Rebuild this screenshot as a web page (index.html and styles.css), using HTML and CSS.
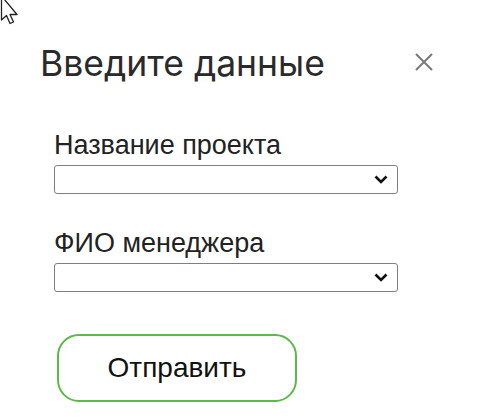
FILE: index.html
```html
<!DOCTYPE html>
<html lang="ru">
<head>
    <meta charset="UTF-8">
    <meta name="viewport" content="width=device-width, initial-scale=1.0">
    <title>Введите данные</title>
    <link rel="stylesheet" href="styles.css">
</head>
<body>
    <svg class="cursor" width="20" height="30" viewBox="0 0 20 30">
        <path d="M1.5 -4 L1.5 20 L6.5 15.5 L10 23.5 L13.5 22 L10 14.5 L17 14.5 Z" fill="#fff" stroke="#222" stroke-width="1.3" stroke-linejoin="round"/>
    </svg>
    <div class="dialog">
        <div class="dialog-header">
            <h2>Введите данные</h2>
            <button class="close" aria-label="Закрыть">
                <svg width="20" height="20" viewBox="0 0 20 20">
                    <path d="M2 2 L18 18 M18 2 L2 18" stroke="#7a7a7a" stroke-width="2"/>
                </svg>
            </button>
        </div>
        <form class="form">
            <label class="field">
                <span>Название проекта</span>
                <div class="select-wrap">
                    <select></select>
                    <svg class="chevron" width="14" height="9" viewBox="0 0 14 9">
                        <path d="M1.5 1.5 L7 7 L12.5 1.5" fill="none" stroke="#111" stroke-width="2.6"/>
                    </svg>
                </div>
            </label>
            <label class="field">
                <span>ФИО менеджера</span>
                <div class="select-wrap">
                    <select></select>
                    <svg class="chevron" width="14" height="9" viewBox="0 0 14 9">
                        <path d="M1.5 1.5 L7 7 L12.5 1.5" fill="none" stroke="#111" stroke-width="2.6"/>
                    </svg>
                </div>
            </label>
            <button type="submit" class="submit">Отправить</button>
        </form>
    </div>
</body>
</html>
```

FILE: styles.css
```css
* {
    box-sizing: border-box;
    margin: 0;
    padding: 0;
}

body {
    font-family: 'Liberation Sans', Arial, sans-serif;
    background-color: #ffffff;
    color: #1a1a1a;
    width: 490px;
    height: 420px;
    overflow: hidden;
}

.cursor {
    position: absolute;
    left: 0;
    top: 0;
}

.dialog {
    padding: 42px 0 0 40px;
    width: 450px;
}

.dialog-header {
    display: flex;
    justify-content: space-between;
    align-items: center;
}

h2 {
    font-family: 'Inter', 'Noto Sans', sans-serif;
    font-weight: 400;
    font-size: 35.5px;
    line-height: 44px;
    color: #2a2a2a;
}

.close {
    border: none;
    background: none;
    width: 20px;
    height: 20px;
    margin: -4px 16px 0 0;
    display: flex;
}

.form {
    padding: 44px 0 0 14px;
    display: flex;
    flex-direction: column;
}

.field {
    display: flex;
    flex-direction: column;
    margin-bottom: 34px;
}

.field span {
    font-size: 27px;
    line-height: 30px;
    color: #222;
    margin-bottom: 5px;
}

.select-wrap {
    position: relative;
    width: 344px;
    height: 29px;
}

.select-wrap select {
    appearance: none;
    width: 100%;
    height: 100%;
    border: 1px solid #7f7f7f;
    border-radius: 3px;
    background-color: #fff;
}

.chevron {
    position: absolute;
    right: 10px;
    top: 10px;
    pointer-events: none;
}

.submit {
    align-self: flex-start;
    margin: 8px 0 0 3px;
    width: 240px;
    height: 68px;
    border: 2px solid #5cb946;
    border-radius: 22px;
    background-color: #fff;
    font-family: 'Liberation Sans', Arial, sans-serif;
    font-size: 28px;
    color: #111;
    cursor: pointer;
}
```
